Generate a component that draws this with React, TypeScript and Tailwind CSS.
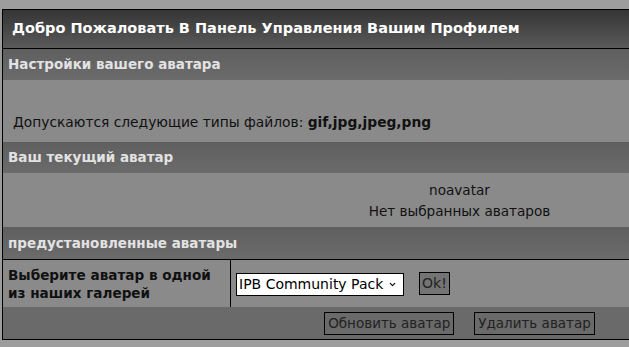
import { ChevronDown } from "lucide-react";

const font = { fontFamily: '"DejaVu Sans", Verdana, sans-serif' };

function SectionHeader({ title, last }: { title: string; last?: boolean }) {
  return (
    <div
      className={`flex h-[31px] items-center bg-gradient-to-b from-[#5f5f5f] to-[#6b6b6b] pl-[5px] text-[13.5px] font-bold text-[#e2e2e2] ${
        last ? "h-[33px] border-b border-black" : ""
      }`}
    >
      {title}
    </div>
  );
}

export default function App() {
  return (
    <div className="h-[347px] w-full overflow-hidden bg-[#9d9d9d]" style={font}>
      <div className="ml-[2px] mt-[9px] w-[915px] border border-black bg-[#8a8a8a]">
        {/* Title bar */}
        <div className="flex h-[39px] items-center border-b border-black bg-gradient-to-b from-[#353535] to-[#5a5a5a] pl-[9px] text-[14.5px] font-bold text-white">
          Добро Пожаловать В Панель Управления Вашим Профилем
        </div>

        <SectionHeader title="Настройки вашего аватара" />
        <div className="h-[62px] pl-[10px] pt-[33px] text-[13.8px] leading-[18px] text-[#111]">
          Допускаются следующие типы файлов: <b>gif,jpg,jpeg,png</b>
        </div>

        <SectionHeader title="Ваш текущий аватар" />
        <div className="h-[54px] pt-[7px] text-center text-[13.6px] leading-[21px] text-[#111]">
          <div>noavatar</div>
          <div>Нет выбранных аватаров</div>
        </div>

        <SectionHeader title="предустановленные аватары" last />

        {/* Gallery row */}
        <div className="flex h-[47px]">
          <div className="w-[228px] border-r border-black pl-[5px] pt-[6px] text-[13.6px] font-bold leading-[18px] text-[#111]">
            Выберите аватар в одной
            <br />
            из наших галерей
          </div>
          <div className="flex items-center pl-[5px]">
            <div className="relative">
              <select
                className="h-[23px] w-[168px] appearance-none border border-black bg-white pl-[2px] text-[14px] text-black outline-none"
                style={font}
                defaultValue="ipb"
              >
                <option value="ipb">IPB Community Pack</option>
              </select>
              <ChevronDown
                className="pointer-events-none absolute right-[7px] top-[8px] h-[9px] w-[9px] text-black"
                strokeWidth={3}
              />
            </div>
            <button
              className="ml-[15px] h-[23px] whitespace-nowrap border border-black bg-[#747474] px-[2px] text-[14px] text-[#222]"
              style={font}
            >
              Ok!
            </button>
          </div>
        </div>

        {/* Actions */}
        <div className="flex h-[32px] items-center justify-center gap-[20px] bg-[#6a6a6a]">
          <button
            className="h-[23px] whitespace-nowrap border border-black px-[3px] text-[13.5px] text-[#222]"
            style={font}
          >
            Обновить аватар
          </button>
          <button
            className="h-[23px] whitespace-nowrap border border-black px-[3px] text-[13.5px] text-[#222]"
            style={font}
          >
            Удалить аватар
          </button>
        </div>
      </div>
    </div>
  );
}
